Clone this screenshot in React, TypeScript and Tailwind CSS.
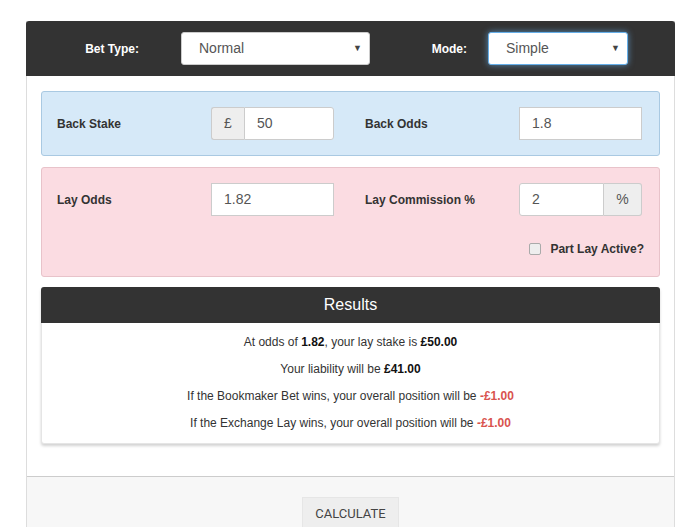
import React from 'react';

const font = { fontFamily: '"Liberation Sans", Arial, sans-serif' };

const Input = ({ value, className = '' }: { value: string; className?: string }) => (
    <div className={`flex h-[33px] items-center border border-[#cccccc] bg-white px-3 text-[14px] text-[#555] ${className}`}>{value}</div>
);

const FakeSelect = ({ value, focus, className = '' }: { value: string; focus?: boolean; className?: string }) => (
    <div
        className={`flex h-[33px] items-center justify-between rounded-[3px] bg-white pl-[17px] pr-[7px] text-[14px] text-[#555] ${
            focus ? 'border border-[#66afe9] shadow-[0_0_6px_rgba(102,175,233,0.7)]' : 'border border-[#cccccc]'
        } ${className}`}
    >
        <span>{value}</span>
        <span className="text-[9px] text-[#444]">▼</span>
    </div>
);

const App = () => {
    return (
        <div className="min-h-[527px] bg-white pt-[21px]" style={font}>
            <div className="ml-[26px] w-[649px] border-x border-[#dddddd]">
                {/* settings bar */}
                <div className="-mx-px flex h-[55px] items-center rounded-t-[3px] bg-[#333333]">
                    <div className="w-[113px] text-right text-[12px] font-bold text-white">Bet Type:</div>
                    <FakeSelect value="Normal" className="ml-[42px] w-[189px]" />
                    <div className="w-[97px] text-right text-[12px] font-bold text-white">Mode:</div>
                    <FakeSelect value="Simple" focus className="ml-[21px] w-[140px]" />
                </div>

                <div className="px-[14px] pt-[15px] pb-[32px]">
                    {/* back */}
                    <div className="flex items-center rounded-[3px] border border-[#a9c9e2] bg-[#d6e9f8] px-[15px] py-[15px]">
                        <div className="w-[154px] text-[12px] font-bold text-[#333]">Back Stake</div>
                        <div className="flex w-[123px]">
                            <div className="flex h-[33px] w-[33px] items-center justify-center rounded-l-[3px] border border-r-0 border-[#cccccc] bg-[#eeeeee] text-[14px] text-[#555]">£</div>
                            <Input value="50" className="flex-1 rounded-r-[3px]" />
                        </div>
                        <div className="ml-[31px] w-[154px] text-[12px] font-bold text-[#333]">Back Odds</div>
                        <Input value="1.8" className="w-[123px]" />
                    </div>

                    {/* lay */}
                    <div className="mt-[11px] rounded-[3px] border border-[#e8c3ca] bg-[#fbdce2] px-[15px] pt-[15px] pb-[18px]">
                        <div className="flex items-center">
                            <div className="w-[154px] text-[12px] font-bold text-[#333]">Lay Odds</div>
                            <Input value="1.82" className="w-[123px]" />
                            <div className="ml-[31px] w-[154px] text-[12px] font-bold text-[#333]">Lay Commission %</div>
                            <div className="flex w-[123px]">
                                <Input value="2" className="flex-1 rounded-l-[3px]" />
                                <div className="flex h-[33px] w-[38px] items-center justify-center rounded-r-[3px] border border-l-0 border-[#cccccc] bg-[#eeeeee] text-[14px] text-[#555]">%</div>
                            </div>
                        </div>
                        <div className="mt-[24px] flex items-center justify-end">
                            <span className="h-[12px] w-[12px] rounded-[2px] border border-[#aaaaaa] bg-[#eeeeee]" />
                            <span className="ml-[9px] text-[12px] font-bold text-[#333]">Part Lay Active?</span>
                        </div>
                    </div>

                    {/* results */}
                    <div className="mt-[10px] rounded-[3px] border border-[#e5e5e5] bg-white shadow-[0_2px_3px_rgba(0,0,0,0.18)]">
                        <div className="-m-px flex h-[36px] items-center justify-center rounded-t-[3px] bg-[#333333] text-[16px] text-white">Results</div>
                        <div className="flex flex-col items-center gap-[10px] pt-[12px] pb-[11px] text-[12px] leading-[17px] text-[#333]">
                            <p>
                                At odds of <b className="text-[#111]">1.82</b>, your lay stake is <b className="text-[#111]">£50.00</b>
                            </p>
                            <p>
                                Your liability will be <b className="text-[#111]">£41.00</b>
                            </p>
                            <p>
                                If the Bookmaker Bet wins, your overall position will be <b className="text-[#d9534f]">-£1.00</b>
                            </p>
                            <p>
                                If the Exchange Lay wins, your overall position will be <b className="text-[#d9534f]">-£1.00</b>
                            </p>
                        </div>
                    </div>
                </div>

                {/* footer */}
                <div className="flex h-[51px] items-start justify-center border-t border-[#cccccc] bg-[#f7f7f7] pt-[20px]">
                    <button
                        type="button"
                        className="h-[34px] w-[97px] border border-[#e6e6e6] bg-[#eeeeee] text-[13px] text-[#444]"
                        style={{ fontFamily: 'Roboto, sans-serif' }}
                    >
                        CALCULATE
                    </button>
                </div>
            </div>
        </div>
    );
};

export default App;
